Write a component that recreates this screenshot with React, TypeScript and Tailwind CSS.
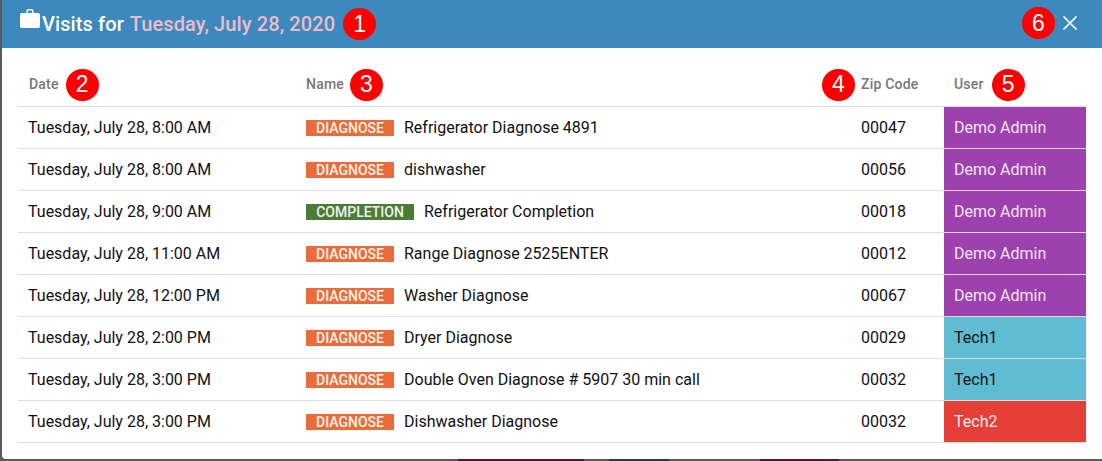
const rows = [
  { date: 'Tuesday, July 28, 8:00 AM', kind: 'DIAGNOSE', name: 'Refrigerator Diagnose 4891', zip: '00047', user: 'Demo Admin' },
  { date: 'Tuesday, July 28, 8:00 AM', kind: 'DIAGNOSE', name: 'dishwasher', zip: '00056', user: 'Demo Admin' },
  { date: 'Tuesday, July 28, 9:00 AM', kind: 'COMPLETION', name: 'Refrigerator Completion', zip: '00018', user: 'Demo Admin' },
  { date: 'Tuesday, July 28, 11:00 AM', kind: 'DIAGNOSE', name: 'Range Diagnose 2525ENTER', zip: '00012', user: 'Demo Admin' },
  { date: 'Tuesday, July 28, 12:00 PM', kind: 'DIAGNOSE', name: 'Washer Diagnose', zip: '00067', user: 'Demo Admin' },
  { date: 'Tuesday, July 28, 2:00 PM', kind: 'DIAGNOSE', name: 'Dryer Diagnose', zip: '00029', user: 'Tech1' },
  { date: 'Tuesday, July 28, 3:00 PM', kind: 'DIAGNOSE', name: 'Double Oven Diagnose # 5907 30 min call', zip: '00032', user: 'Tech1' },
  { date: 'Tuesday, July 28, 3:00 PM', kind: 'DIAGNOSE', name: 'Dishwasher Diagnose', zip: '00032', user: 'Tech2' },
];

function Marker({ n }: { n: number }) {
  return (
    <span className="flex h-[32px] w-[33px] shrink-0 items-center justify-center rounded-full bg-[#fe0000] font-['Liberation_Sans',sans-serif] text-[23px] leading-none font-normal tracking-normal text-white">
      {n}
    </span>
  );
}

function userColor(user: string) {
  if (user === 'Tech1') return 'bg-[#5fbcd3] text-[#111]';
  if (user === 'Tech2') return 'bg-[#e53f38] text-[#fdeeee]';
  return 'bg-[#9c41ae] text-[#f3e5f5]';
}

export default function App() {
  return (
    <div className="flex h-[461px] w-[1102px] flex-col overflow-hidden bg-[#5a5a5a] pl-[2px] font-['Roboto',sans-serif]">
      <div className="h-[459px] shrink-0 overflow-hidden rounded-bl-[4px] bg-white">
        <div className="flex h-[48px] items-center justify-between bg-[#3d88bd] pr-[24px] pl-[18px]">
          <div className="flex items-center text-[20px] font-medium tracking-[0.1px] text-white">
            <svg width="20" height="19" viewBox="0 0 20 19" className="mb-[11px] shrink-0" fill="#fff">
              <path d="M6.500 4V2C6.500.9 7.400 0 8.500 0h3c1.100 0 2 .9 2 2v2H18c1.100 0 2 .9 2 2v11c0 1.100-.9 2-2 2H2c-1.100 0-2-.9-2-2V6c0-1.100.9-2 2-2h4.500zM8 4h4V1.500H8V4z" />
            </svg>
            <span className="ml-[2px]">Visits for</span>
            <span className="ml-[6px] text-[#ebbccb]">Tuesday, July 28, 2020</span>
            <span className="ml-[8px]"><Marker n={1} /></span>
          </div>
          <div className="mb-[2px] flex items-center gap-[7px]">
            <Marker n={6} />
            <svg width="16" height="16" viewBox="0 0 16 16" stroke="#fff" strokeWidth="1.700" fill="none">
              <path d="M1.500 1.500l13 13M14.500 1.500l-13 13" />
            </svg>
          </div>
        </div>
        <div className="px-[16px]">
          <table className="w-[1068px] table-fixed border-collapse text-[16px] text-[#111]">
            <colgroup>
              <col className="w-[278px]" />
              <col className="w-[555px]" />
              <col className="w-[93px]" />
              <col className="w-[142px]" />
            </colgroup>
            <thead>
              <tr className="h-[58px] border-b border-[#ddd] text-left text-[14px] font-medium tracking-[0.2px] text-[#777]">
                <th className="pt-[16px] pl-[11px] font-medium">
                  <div className="flex items-center gap-[7px]">Date <Marker n={2} /></div>
                </th>
                <th className="pt-[16px] pl-[10px] font-medium">
                  <div className="flex items-center gap-[6px]">Name <Marker n={3} /></div>
                </th>
                <th className="pt-[16px] pl-[10px] font-medium">
                  <div className="relative">
                    Zip Code
                    <span className="absolute top-1/2 left-[-39px] -translate-y-1/2"><Marker n={4} /></span>
                  </div>
                </th>
                <th className="pt-[16px] pl-[10px] font-medium">
                  <div className="flex items-center gap-[8px]">User <Marker n={5} /></div>
                </th>
              </tr>
            </thead>
            <tbody>
              {rows.map((r, i) => (
                <tr key={i} className="h-[42px] border-b border-[#ddd]">
                  <td className="pt-[2px] pl-[10px]">{r.date}</td>
                  <td className="pt-[2px] pl-[10px]">
                    <div className="flex items-center">
                      <span
                        className={
                          r.kind === 'COMPLETION'
                            ? 'flex h-[16px] w-[108px] items-center justify-center bg-[#4a7c34] text-[14px] font-medium text-[#f2f2f2]'
                            : 'flex h-[16px] w-[88px] items-center justify-center bg-[#e96d3a] text-[14px] font-medium text-[#fdf3ee]'
                        }
                      >
                        {r.kind}
                      </span>
                      <span className="ml-[10px]">{r.name}</span>
                    </div>
                  </td>
                  <td className="pt-[2px] pl-[10px]">{r.zip}</td>
                  <td className={`pt-[2px] pl-[10px] ${userColor(r.user)}`}>{r.user}</td>
                </tr>
              ))}
            </tbody>
          </table>
        </div>
      </div>
      {/* page behind the modal, only its top edge shows */}
      <div className="flex h-[2px] shrink-0">
        <div className="ml-[456px] w-[126px] bg-[#3f1a4a]" />
        <div className="ml-[25px] w-[60px] bg-[#1c3a63]" />
        <div className="ml-[91px] w-[79px] bg-[#3f1a4a]" />
      </div>
    </div>
  );
}
